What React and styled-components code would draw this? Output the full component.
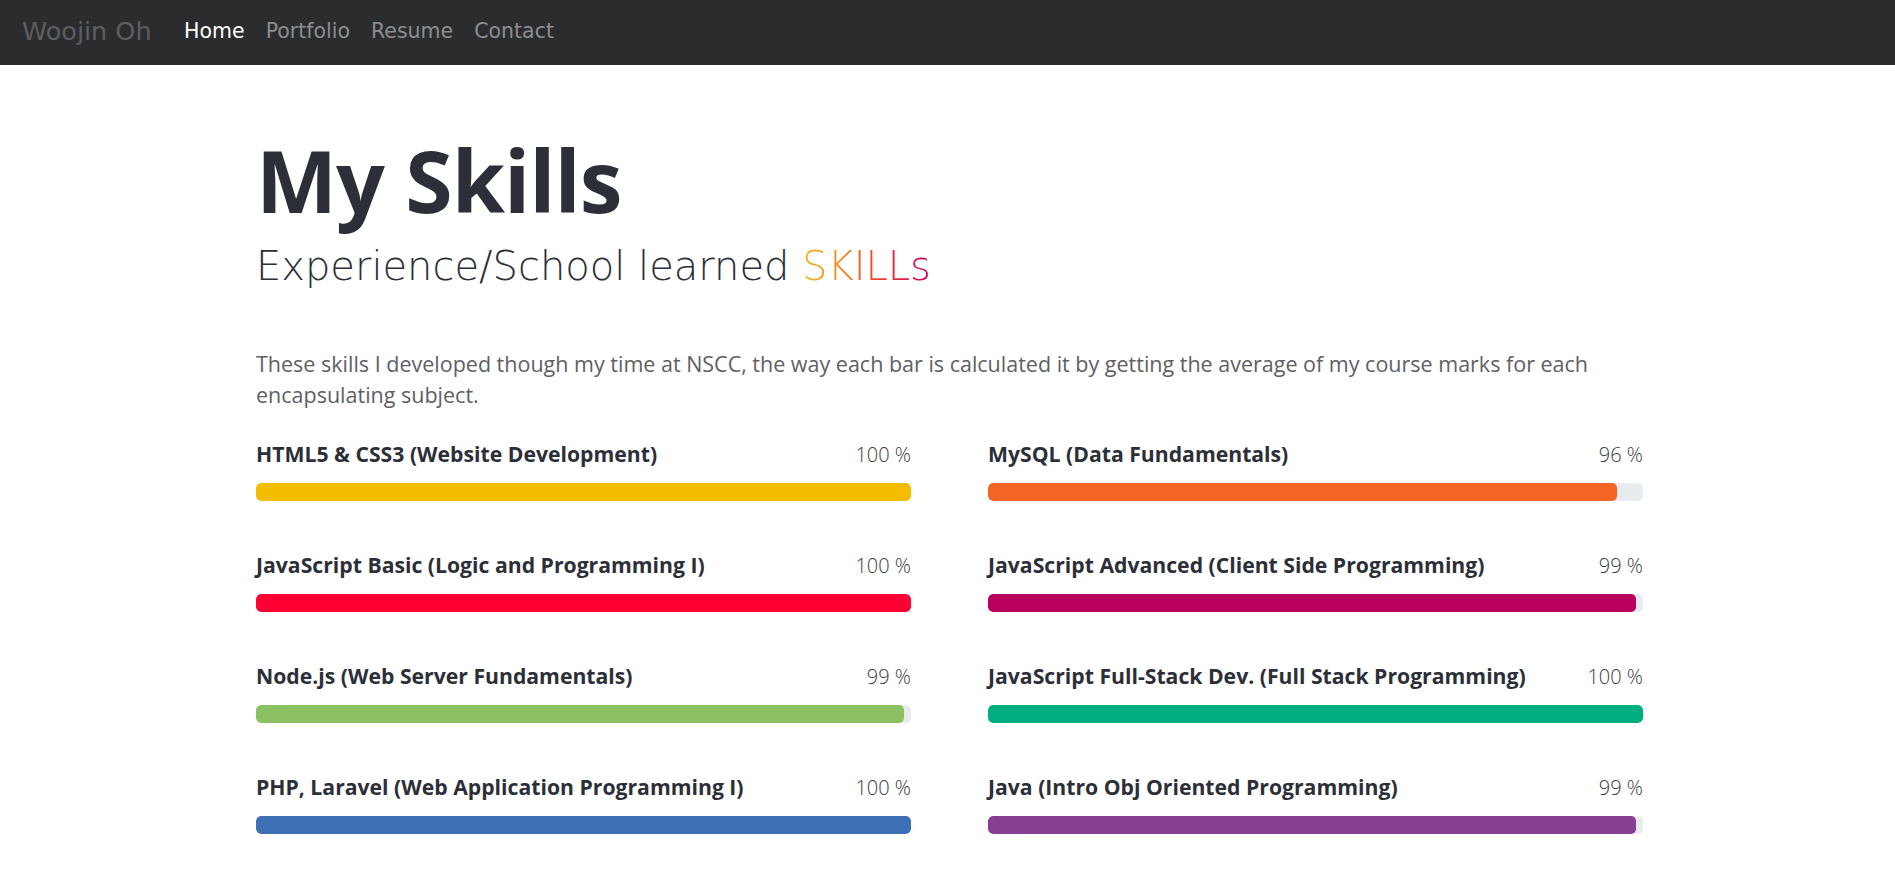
import styled, { createGlobalStyle } from "styled-components";

const GlobalStyle = createGlobalStyle`
  * { box-sizing: border-box; }
  body {
    margin: 0;
    background: #fff;
    font-family: "Open Sans", "Liberation Sans", sans-serif;
  }
`;

const skills = [
  { name: "HTML5 & CSS3 (Website Development)", value: 100, color: "#f4bd00" },
  { name: "MySQL (Data Fundamentals)", value: 96, color: "#f26525" },
  { name: "JavaScript Basic (Logic and Programming I)", value: 100, color: "#ff0035" },
  { name: "JavaScript Advanced (Client Side Programming)", value: 99, color: "#b9005c" },
  { name: "Node.js (Web Server Fundamentals)", value: 99, color: "#8cc161" },
  { name: "JavaScript Full-Stack Dev. (Full Stack Programming)", value: 100, color: "#00ae7f" },
  { name: "PHP, Laravel (Web Application Programming I)", value: 100, color: "#3d6fb5" },
  { name: "Java (Intro Obj Oriented Programming)", value: 99, color: "#863f93" },
];

export default function App() {
  return (
    <>
      <GlobalStyle />
      <Navbar>
        <Brand>Woojin Oh</Brand>
        <NavList>
          <NavLink $active>Home</NavLink>
          <NavLink>Portfolio</NavLink>
          <NavLink>Resume</NavLink>
          <NavLink>Contact</NavLink>
        </NavList>
      </Navbar>
      <Main>
        <Title>My Skills</Title>
        <Subtitle>
          Experience/School learned <Gradient>SKILLs</Gradient>
        </Subtitle>
        <Intro>
          These skills I developed though my time at NSCC, the way each bar is
          calculated it by getting the average of my course marks for each
          encapsulating subject.
        </Intro>
        <SkillGrid>
          {skills.map((s) => (
            <Skill key={s.name}>
              <SkillHead>
                <SkillName>{s.name}</SkillName>
                <SkillValue>{s.value} %</SkillValue>
              </SkillHead>
              <Track>
                <Fill $color={s.color} style={{ width: `${s.value}%` }} />
              </Track>
            </Skill>
          ))}
        </SkillGrid>
      </Main>
    </>
  );
}

const Navbar = styled.nav`
  height: 65px;
  background: #2b2c2e;
  display: flex;
  align-items: center;
  padding: 0 22px 3px;
  font-family: "DejaVu Sans", "Open Sans", sans-serif;
`;

const Brand = styled.div`
  color: #5d5e60;
  font-size: 25.5px;
  font-weight: 400;
  margin-right: 22px;
`;

const NavList = styled.div`
  display: flex;
`;

const NavLink = styled.a`
  color: ${(p) => (p.$active ? "#ffffff" : "#8d8e8f")};
  font-size: 20.5px;
  padding: 0 10.5px;
  cursor: pointer;
`;

const Main = styled.main`
  max-width: 1391px;
  margin: 0 auto;
  padding: 63px 0 0 4px;
  color: #2d2f38;
`;

const Title = styled.h1`
  margin: 0;
  font-size: 86px;
  font-weight: 700;
  line-height: 1.2;
  letter-spacing: -1px;
`;

const Subtitle = styled.h2`
  margin: 11px 0 0;
  font-family: "DejaVu Sans", "Open Sans", sans-serif;
  font-size: 40px;
  font-weight: 300;
  line-height: 48px;
  color: #2d2f38;
`;

const Gradient = styled.span`
  background: linear-gradient(90deg, #f4b81a 0%, #f08a1f 30%, #f0303a 65%, #c0005a 100%);
  -webkit-background-clip: text;
  background-clip: text;
  color: transparent;
`;

const Intro = styled.p`
  margin: 58px 0 29px;
  font-size: 21.5px;
  line-height: 31px;
  color: #5f6064;
`;

const SkillGrid = styled.div`
  display: grid;
  grid-template-columns: 1fr 1fr;
  column-gap: 77px;
`;

const Skill = styled.div`
  padding-bottom: 49px;
`;

const SkillHead = styled.div`
  display: flex;
  justify-content: space-between;
  align-items: baseline;
  line-height: 30px;
  margin-bottom: 13px;
`;

const SkillName = styled.span`
  font-size: 21.2px;
  font-weight: 700;
  color: #2d2f38;
`;

const SkillValue = styled.span`
  font-size: 20px;
  font-weight: 300;
  color: #3a3b40;
`;

const Track = styled.div`
  height: 18px;
  background: #e9ecef;
  border-radius: 5px;
  overflow: hidden;
`;

const Fill = styled.div`
  height: 100%;
  background: ${(p) => p.$color};
  border-radius: 5px;
`;
